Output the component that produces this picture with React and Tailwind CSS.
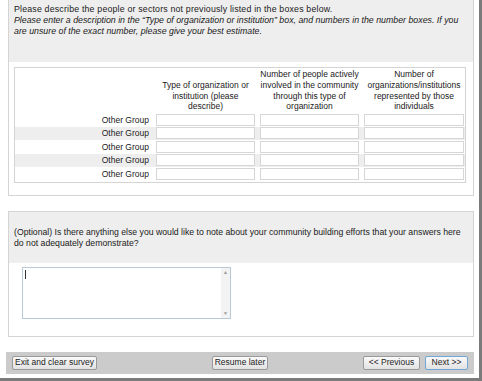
import React from "react";

const font = { fontFamily: '"Liberation Sans", Arial, sans-serif' };

function Input() {
  return <div className="h-[12px] border border-[#d6d6d6] bg-white" />;
}

function Btn({ children, w, primary }) {
  return (
    <div
      className={`h-[14px] ${w} flex items-center justify-center rounded-[2px] border text-[8.5px] leading-none text-[#222] bg-gradient-to-b from-[#fafafa] to-[#e2e2e2] ${
        primary ? "border-[#6fa7d8]" : "border-[#9a9a9a]"
      }`}
    >
      {children}
    </div>
  );
}

const cols = "grid grid-cols-[136px_99px_99px_100px] gap-x-[5px]";

export default function App() {
  const rows = [0, 1, 2, 3, 4];
  return (
    <div
      style={font}
      className="w-[482px] h-[381px] bg-white border-r-[3px] border-b-[3px] border-[#7b7b7b] overflow-hidden text-[#1a1a1a]"
    >
      <div className="pl-[8px] pr-[5px] flex flex-col">
        {/* Panel 1 */}
        <div className="border border-t-0 border-[#d4d4d4] flex flex-col">
          <div className="h-[62px] bg-[#eeeeee] px-[5px] pt-[4px] text-[8.8px] leading-[11px]">
            <div className="tracking-[0.18px]">Please describe the people or sectors not previously listed in the boxes below.</div>
            <div className="italic">
              Please enter a description in the “Type of organization or institution” box, and numbers in the number boxes. If you are unsure of the exact number, please give your best estimate.
            </div>
          </div>
          <div className="ml-[5px] mr-[7px] mt-[5px] mb-[12px] border border-[#d4d4d4] flex flex-col pb-[1px]">
            <div className={`${cols} items-end pt-[1px] pb-[1px] text-[8.5px] leading-[10.8px] text-center whitespace-nowrap`}>
              <div />
              <div>Type of organization or<br />institution (please<br />describe)</div>
              <div>Number of people actively<br />involved in the community<br />through this type of<br />organization</div>
              <div>Number of<br />organizations/institutions<br />represented by those<br />individuals</div>
            </div>
            {rows.map((r) => (
              <div
                key={r}
                className={`${cols} items-center h-[13.5px] ${
                  r % 2 === 1 ? "bg-[#eeeeee]" : "bg-white"
                }`}
              >
                <div className="text-right pr-[2px] text-[8.5px] leading-none">Other Group</div>
                <Input />
                <Input />
                <Input />
              </div>
            ))}
          </div>
        </div>

        {/* Panel 2 */}
        <div className="mt-[15px] border border-[#d4d4d4] flex flex-col">
          <div className="h-[51px] bg-[#eeeeee] px-[5px] pt-[2px] flex items-center text-[8.7px] leading-[11px]">
            <div>
              (Optional) Is there anything else you would like to note about your community building efforts that your answers here do not adequately demonstrate?
            </div>
          </div>
          <div className="ml-[13px] mt-[4px] mb-[17px] w-[209px] h-[52px] border border-[#b9c9d9] flex">
            <div className="flex-1 pl-[2px] pt-[2px]">
              <div className="w-px h-[9px] bg-[#333]" />
            </div>
            <div className="w-[9px] bg-[#f3f3f3] flex flex-col justify-between items-center py-[2px] text-[5px] leading-none text-[#9a9a9a]">
              <span>▲</span>
              <span>▼</span>
            </div>
          </div>
        </div>

        {/* Footer */}
        <div className="-ml-[2px] mt-[15px] h-[22px] bg-[#cbcbcb] grid grid-cols-3 items-center px-[6px]">
          <div className="flex">
            <Btn w="w-[85px]">Exit and clear survey</Btn>
          </div>
          <div className="flex justify-center">
            <Btn w="w-[56px]">Resume later</Btn>
          </div>
          <div className="flex justify-end gap-[5px]">
            <Btn w="w-[57px]">&lt;&lt; Previous</Btn>
            <Btn w="w-[43px]" primary>
              Next &gt;&gt;
            </Btn>
          </div>
        </div>
      </div>
    </div>
  );
}
